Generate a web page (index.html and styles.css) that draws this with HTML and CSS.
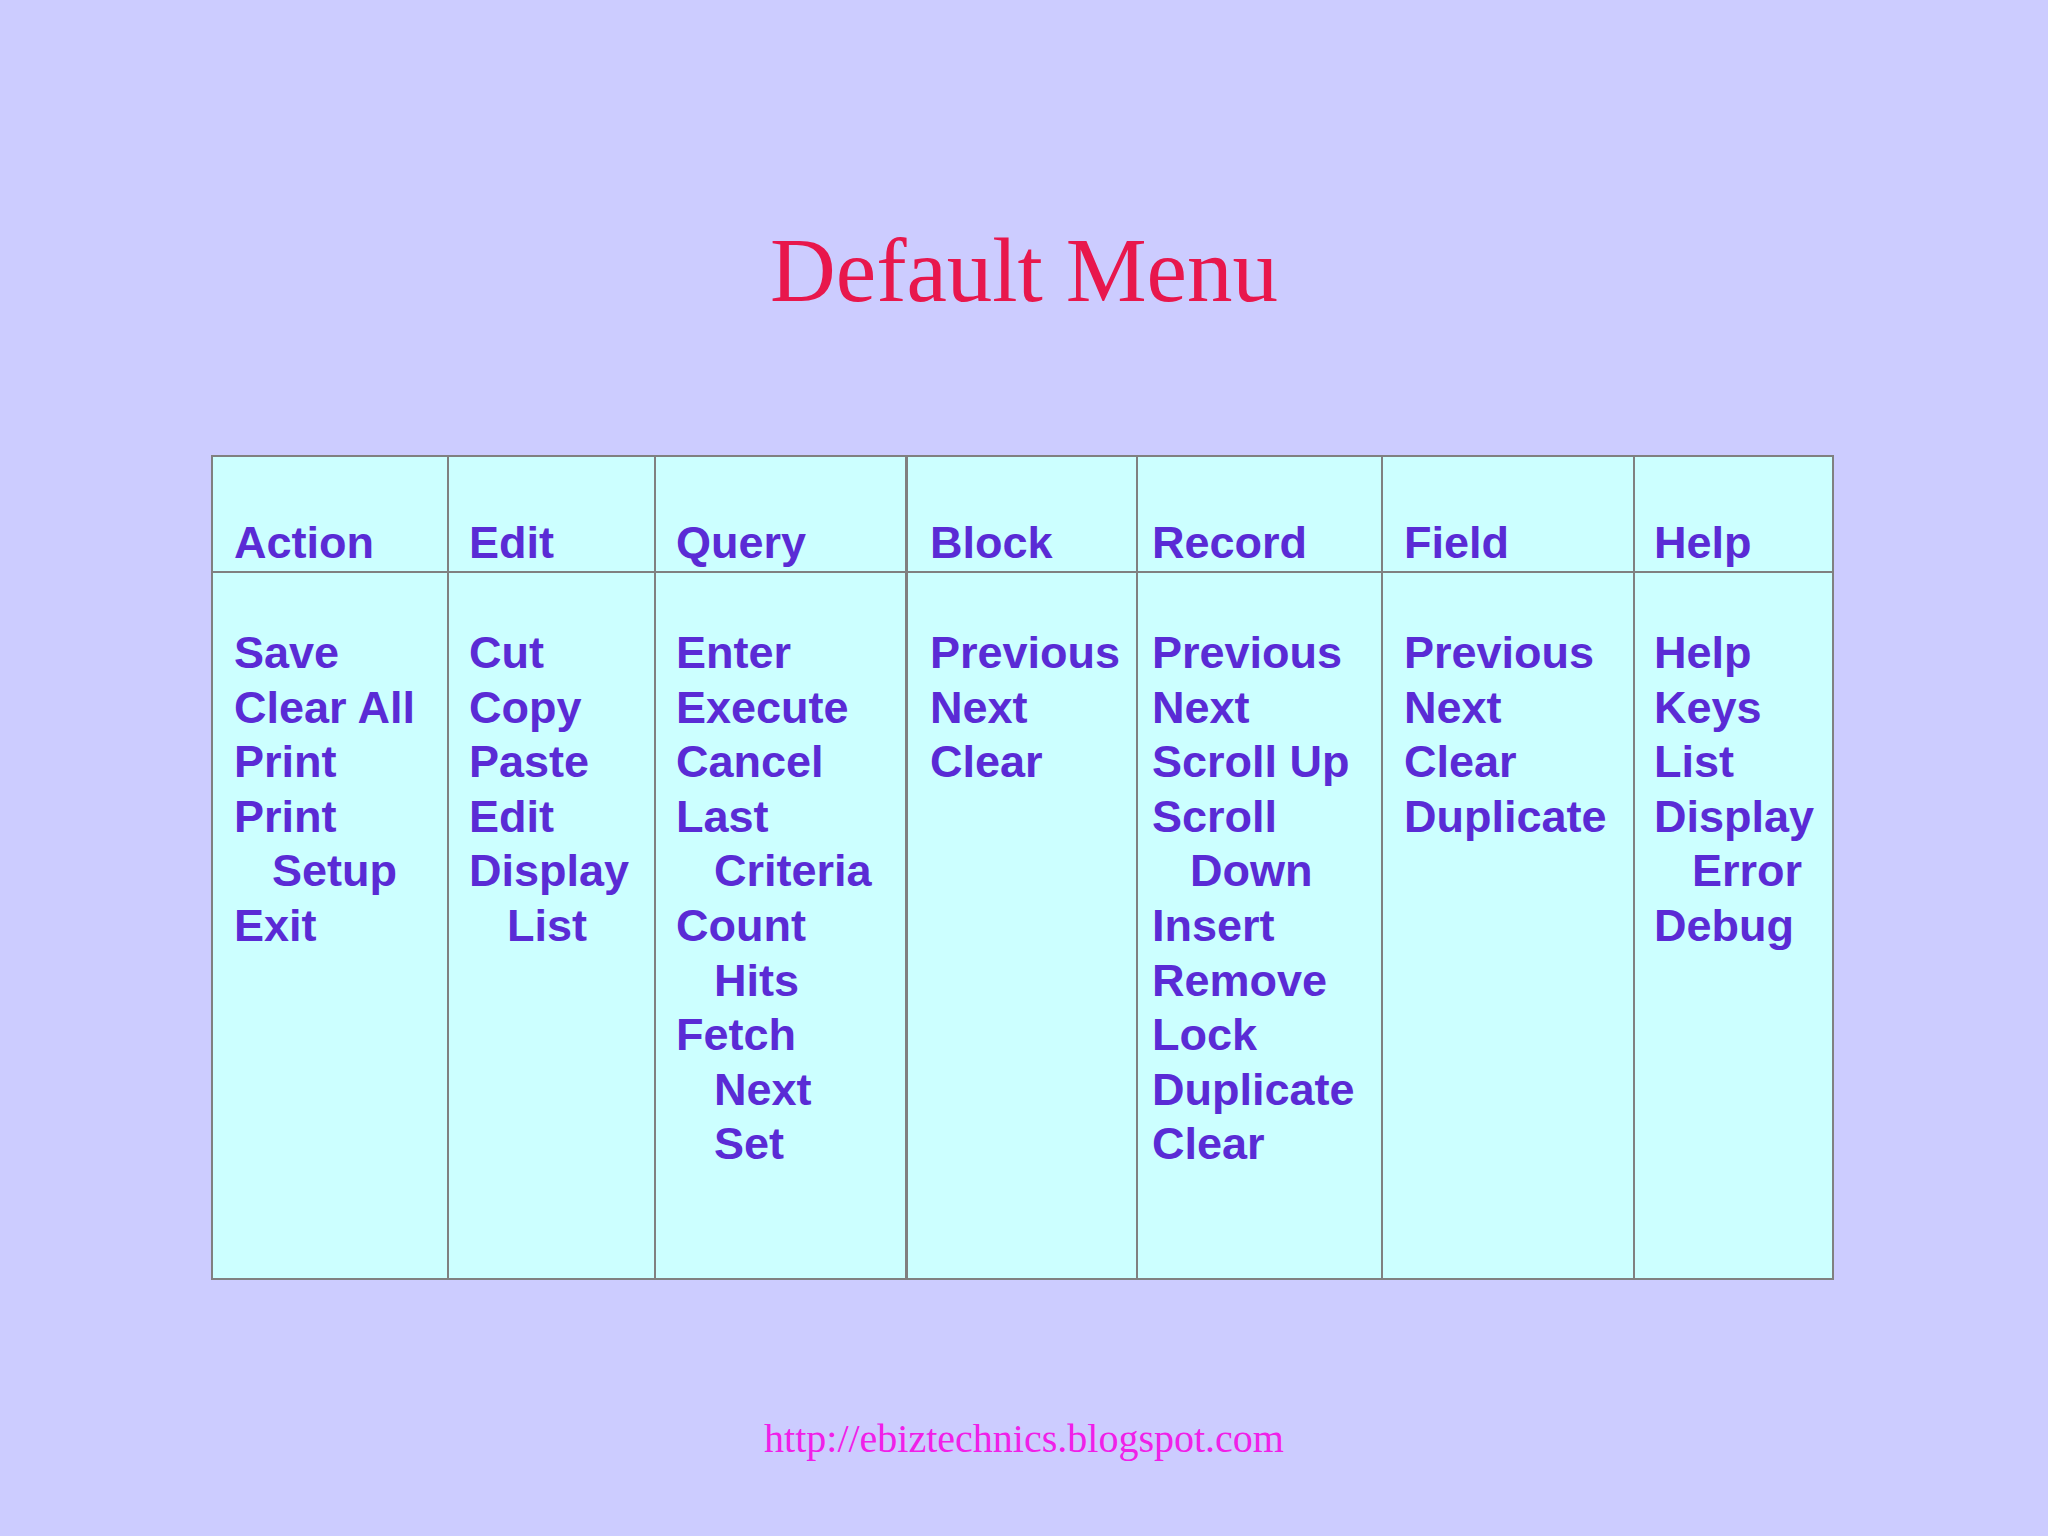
FILE: index.html
```html
<!DOCTYPE html>
<html>
<head>
<meta charset="utf-8">
<title>Default Menu</title>
<link rel="stylesheet" href="styles.css">
</head>
<body>
<div class="slide">
  <h1 class="title">Default Menu</h1>
  <div class="menu">
    <div class="head c1">Action</div>
    <div class="head c2">Edit</div>
    <div class="head c3">Query</div>
    <div class="head c4">Block</div>
    <div class="head c5">Record</div>
    <div class="head c6">Field</div>
    <div class="head c7">Help</div>

    <div class="body c1">
      <div>Save</div>
      <div>Clear All</div>
      <div>Print</div>
      <div>Print</div>
      <div class="ind">Setup</div>
      <div>Exit</div>
    </div>
    <div class="body c2">
      <div>Cut</div>
      <div>Copy</div>
      <div>Paste</div>
      <div>Edit</div>
      <div>Display</div>
      <div class="ind">List</div>
    </div>
    <div class="body c3">
      <div>Enter</div>
      <div>Execute</div>
      <div>Cancel</div>
      <div>Last</div>
      <div class="ind">Criteria</div>
      <div>Count</div>
      <div class="ind">Hits</div>
      <div>Fetch</div>
      <div class="ind">Next</div>
      <div class="ind">Set</div>
    </div>
    <div class="body c4">
      <div>Previous</div>
      <div>Next</div>
      <div>Clear</div>
    </div>
    <div class="body c5">
      <div>Previous</div>
      <div>Next</div>
      <div>Scroll Up</div>
      <div>Scroll</div>
      <div class="ind">Down</div>
      <div>Insert</div>
      <div>Remove</div>
      <div>Lock</div>
      <div>Duplicate</div>
      <div>Clear</div>
    </div>
    <div class="body c6">
      <div>Previous</div>
      <div>Next</div>
      <div>Clear</div>
      <div>Duplicate</div>
    </div>
    <div class="body c7">
      <div>Help</div>
      <div>Keys</div>
      <div>List</div>
      <div>Display</div>
      <div class="ind">Error</div>
      <div>Debug</div>
    </div>
  </div>
  <div class="footer">http://ebiztechnics.blogspot.com</div>
</div>
</body>
</html>
```

FILE: styles.css
```css
html, body {
  margin: 0;
  padding: 0;
}

body {
  background: #ccccff;
}

.slide {
  width: 2048px;
  height: 1536px;
  padding-top: 225px;
  box-sizing: border-box;
  background: #ccccff;
  overflow: hidden;
}

.title {
  margin: 0;
  font-family: "Liberation Serif", "Times New Roman", serif;
  font-weight: normal;
  font-size: 91px;
  line-height: 91px;
  color: #e8174c;
  text-align: center;
}

.menu {
  display: grid;
  grid-template-columns: 234px 205px 249px 229px 243px 250px 197px;
  grid-template-rows: 114px 705px;
  gap: 2px;
  width: max-content;
  margin: 139px 0 0 211px;
  background: #808080;
  border: 2px solid #808080;
  font-family: "Liberation Sans", Arial, sans-serif;
  font-weight: bold;
  font-size: 45px;
  line-height: 54.6px;
  color: #5a2bd5;
}

.head {
  background: #ccffff;
  display: flex;
  align-items: flex-end;
  white-space: nowrap;
}

.body {
  background: #ccffff;
  padding-top: 53px;
  white-space: nowrap;
}

.ind {
  padding-left: 38px;
}

.c1 { padding-left: 21px; }
.c2 { padding-left: 20px; }
.c3 { padding-left: 20px; }
.c4 { padding-left: 22px; border-left: 1px solid #808080; }
.c5 { padding-left: 14px; }
.c6 { padding-left: 21px; }
.c7 { padding-left: 19px; }

.footer {
  margin-top: 139px;
  font-family: "Liberation Serif", "Times New Roman", serif;
  font-size: 40px;
  line-height: 40px;
  color: #f020e8;
  text-align: center;
}
```
